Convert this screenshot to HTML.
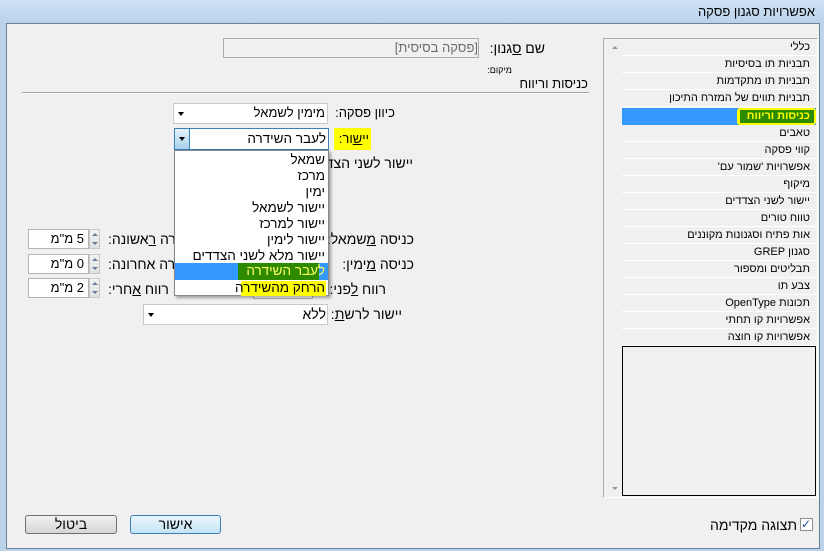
<!DOCTYPE html>
<html><head><meta charset="utf-8"><style>
*{box-sizing:border-box}
body{margin:0;width:824px;height:551px;overflow:hidden;background:#bcd3ea;font-family:"Liberation Sans","DejaVu Sans",sans-serif;font-size:13px;color:#000;position:relative}
.a{position:absolute}
.t{position:absolute;white-space:nowrap;direction:rtl;line-height:16px}
.combo{position:absolute;background:#fff;border:1px solid #c8c8c8}
.arr{position:absolute;width:0;height:0;border-left:3.5px solid transparent;border-right:3.5px solid transparent;border-top:4px solid #000}
.spin{position:absolute;background:#fff;border:1px solid #b4b4b4;text-align:right;padding-right:4px;line-height:18px;font-size:13px;direction:rtl}
.sb{position:absolute;width:11px;height:20px;border:1px solid #c8c8c8;background:linear-gradient(#f4f4f4,#e0e0e0)}
.sb:before{content:"";position:absolute;left:2px;top:3px;border-left:3px solid transparent;border-right:3px solid transparent;border-bottom:3px solid #6a7c96}
.sb:after{content:"";position:absolute;left:2px;top:12px;border-left:3px solid transparent;border-right:3px solid transparent;border-top:3px solid #6a7c96}
.li{position:absolute;left:622px;width:194px;height:17px;border-bottom:1px solid #fff;font-size:11px;text-align:right;padding-right:6px;line-height:16px;direction:rtl}
.dd{position:absolute;left:0;width:153px;height:16px;text-align:right;padding-right:3px;line-height:16px;font-size:13.5px;direction:rtl}
</style></head><body>
<div class="a" style="left:0;top:0;width:824px;height:24px;background:linear-gradient(#cfe2f5,#b8d2ec)"></div>
<div class="t" style="right:9px;top:4px;font-size:13px">אפשרויות סגנון פסקה</div>
<div class="a" style="left:6px;top:23px;width:814px;height:526px;background:#f0f0f0;border:1px solid #6b7f99"></div>

<div class="a" style="left:223px;top:38px;width:256px;height:20px;border:1px solid #adadad;background:#f0f0f0"></div>
<div class="t" style="right:346px;top:40px;color:#6d6d6d">[פסקה בסיסית]</div>
<div class="t" style="right:279px;top:40px;font-size:14px">שם <u>ס</u>גנון:</div>
<div class="t" style="right:312px;top:62px;font-size:9px">מיקום:</div>
<div class="t" style="right:236px;top:76px;font-size:13px">כניסות וריווח</div>
<div class="a" style="left:22px;top:92px;width:567px;height:1px;background:#a0a0a0"></div>
<div class="a" style="left:22px;top:93px;width:567px;height:1px;background:#fff"></div>

<div class="combo" style="left:173px;top:103px;width:155px;height:21px"></div>
<div class="arr" style="left:178px;top:112px"></div>
<div class="t" style="right:499px;top:105px">מימין לשמאל</div>
<div class="t" style="right:429px;top:105px">כיוון פסקה:</div>

<div class="a" style="left:334px;top:128px;width:37px;height:22px;background:#ffff00"></div>
<div class="t" style="right:455px;top:131px">יי<u>ש</u>ור:</div>
<div class="combo" style="left:174px;top:128px;width:155px;height:22px;border-color:#3c7fb1"></div>
<div class="a" style="left:175px;top:129px;width:15px;height:20px;background:linear-gradient(#e5f4fc,#a6d2ed);border-right:1px solid #3c7fb1"></div>
<div class="arr" style="left:179px;top:137px"></div>
<div class="t" style="right:498px;top:131px;font-size:13.5px">לעבר השידרה</div>

<div class="t" style="right:411px;top:155px;font-size:14px">יישור לשני הצדדים:</div>

<div class="t" style="right:410px;top:231px;font-size:14px">כניסה <u>מ</u>שמאל:</div>
<div class="t" style="right:410px;top:256px;font-size:14px">כניסה <u>מ</u>ימין:</div>
<div class="t" style="right:438px;top:281px;font-size:14px">רווח <u>ל</u>פני:</div>
<div class="t" style="left:108px;top:231px;font-size:14px">שורה <u>ר</u>אשונה:</div>
<div class="t" style="left:108px;top:256px;font-size:14px">שורה אחרונה:</div>
<div class="t" style="left:108px;top:281px;font-size:14px">רווח <u>א</u>חרי:</div>
<div class="spin" style="left:28px;top:229px;width:61px;height:20px">5 מ"מ</div>
<div class="sb" style="left:89px;top:229px"></div>
<div class="spin" style="left:28px;top:254px;width:61px;height:20px">0 מ"מ</div>
<div class="sb" style="left:89px;top:254px"></div>
<div class="spin" style="left:28px;top:278px;width:61px;height:20px">2 מ"מ</div>
<div class="sb" style="left:89px;top:278px"></div>
<div class="a" style="left:253px;top:279px;width:60px;height:20px;border:1px solid #b4b4b4;background:#fff"></div>

<div class="combo" style="left:143px;top:304px;width:185px;height:21px"></div>
<div class="arr" style="left:148px;top:313px"></div>
<div class="t" style="right:498px;top:306px;font-size:14px">ללא</div>
<div class="t" style="right:422px;top:306px;font-size:14px">יישור לרש<u>ת</u>:</div>

<div class="a" style="left:174px;top:150px;width:155px;height:146px;background:#fff;border:1px solid #828790;box-shadow:2px 2px 3px rgba(0,0,0,.35)">
<div class="dd" style="top:1px">שמאל</div>
<div class="dd" style="top:17px">מרכז</div>
<div class="dd" style="top:33px">ימין</div>
<div class="dd" style="top:49px">יישור לשמאל</div>
<div class="dd" style="top:65px">יישור למרכז</div>
<div class="dd" style="top:81px">יישור לימין</div>
<div class="dd" style="top:97px">יישור מלא לשני הצדדים</div>
<div class="a" style="left:0;top:112px;width:153px;height:17px;background:#3399ff"></div>
<div class="a" style="left:63px;top:112px;width:81px;height:17px;background:#2e8b00"></div>
<div class="dd" style="top:112px;color:#ffff66">לעבר השידרה</div>
<div class="a" style="left:66px;top:130px;width:85px;height:15px;background:#ffff00"></div>
<div class="dd" style="top:129px">הרחק מהשידרה</div>
</div>

<div class="a" style="left:603px;top:38px;width:215px;height:460px;border:1px solid #adadad;background:#f0f0f0;border-right-color:#fff;border-bottom-color:#fff"></div>
<div class="a" style="left:612px;top:46px;width:0;height:0;border-left:3px solid transparent;border-right:3px solid transparent;border-bottom:3px solid #999"></div>
<div class="a" style="left:612px;top:487px;width:0;height:0;border-left:3px solid transparent;border-right:3px solid transparent;border-top:3px solid #999"></div>
<div class="li" style="top:39px">כללי</div>
<div class="li" style="top:56px">תבניות תו בסיסיות</div>
<div class="li" style="top:73px">תבניות תו מתקדמות</div>
<div class="li" style="top:90px">תבניות תווים של המזרח התיכון</div>
<div class="li" style="top:108px;background:#3399ff;border-bottom:0"></div>
<div class="a" style="left:737px;top:108px;width:79px;height:17px;background:#ffff00;border-radius:3px"></div>
<div class="a" style="left:740px;top:110px;width:74px;height:13px;background:#2e8b00"></div>
<div class="li" style="top:108px;color:#ffff00;font-weight:bold;background:transparent;border:0">כניסות וריווח</div>
<div class="li" style="top:125px">טאבים</div>
<div class="li" style="top:142px">קווי פסקה</div>
<div class="li" style="top:159px">אפשרויות 'שמור עם'</div>
<div class="li" style="top:176px">מיקוף</div>
<div class="li" style="top:193px">יישור לשני הצדדים</div>
<div class="li" style="top:210px">טווח טורים</div>
<div class="li" style="top:227px">אות פתיח וסגנונות מקוננים</div>
<div class="li" style="top:244px">סגנון GREP</div>
<div class="li" style="top:261px">תבליטים ומספור</div>
<div class="li" style="top:278px">צבע תו</div>
<div class="li" style="top:295px">תכונות OpenType</div>
<div class="li" style="top:312px">אפשרויות קו תחתי</div>
<div class="li" style="top:329px">אפשרויות קו חוצה</div>
<div class="a" style="left:622px;top:346px;width:194px;height:150px;border:1px solid #000;background:#f0f0f0"></div>

<div class="a" style="left:800px;top:518px;width:13px;height:13px;border:1px solid #8f8f8f;background:#fff"></div>
<div class="t" style="left:801px;top:516px;color:#2a4d9a;font-size:12px">✓</div>
<div class="t" style="right:27px;top:517px;font-size:14px">תצוגה מקדימה</div>
<div class="a" style="left:130px;top:515px;width:91px;height:19px;border:1px solid #3c7fb1;border-radius:3px;background:linear-gradient(#eaf6fd,#c4e5f6)"></div>
<div class="t" style="left:130px;width:91px;text-align:center;top:516px;font-size:14px">אישור</div>
<div class="a" style="left:25px;top:515px;width:92px;height:19px;border:1px solid #707070;border-radius:3px;background:linear-gradient(#f2f2f2,#d5d5d5)"></div>
<div class="t" style="left:25px;width:92px;text-align:center;top:516px;font-size:14px">ביטול</div>
</body></html>
